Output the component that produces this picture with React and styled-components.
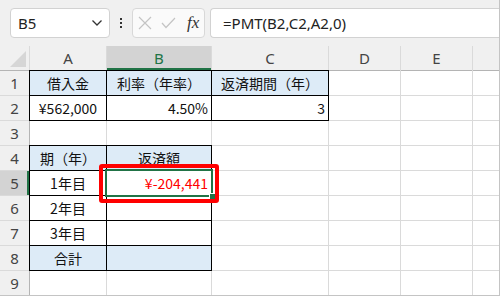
import { Fragment } from 'react';
import styled, { createGlobalStyle } from 'styled-components';

const GlobalStyle = createGlobalStyle`
  html, body {
    margin: 0;
    padding: 0;
    background: #fff;
  }
  body {
    font-family: "Noto Sans CJK JP", "Noto Sans", sans-serif;
  }
`;

const green = '#217346';
const ui = '"Noto Sans", "Noto Sans CJK JP", sans-serif';

const Frame = styled.div`
  width: 500px;
  height: 296px;
  box-sizing: border-box;
  border-right: 1px solid #c4c4c4;
  border-bottom: 1px solid #c4c4c4;
  background: #f0f0f0;
  overflow: hidden;
`;

const Toolbar = styled.div`
  display: flex;
  align-items: flex-start;
  height: 46px;
  padding: 8px 0 0 10px;
  box-sizing: border-box;
`;

const NameBox = styled.div`
  display: flex;
  align-items: center;
  justify-content: space-between;
  width: 100px;
  height: 30px;
  box-sizing: border-box;
  padding: 0 6px 0 7px;
  background: #fff;
  border: 1px solid #d2d2d2;
  border-radius: 4px;
  font-family: ${ui};
  font-size: 15px;
  color: #222;
`;

const MoreDots = styled.div`
  display: flex;
  flex-direction: column;
  align-items: center;
  justify-content: center;
  gap: 2px;
  width: 22px;
  height: 30px;

  span {
    width: 2px;
    height: 2px;
    background: #333;
  }
`;

const FormulaButtons = styled.div`
  display: flex;
  align-items: center;
  gap: 9px;
  width: 73px;
  height: 30px;
  box-sizing: border-box;
  padding: 0 0 0 5px;
  background: #fafafa;
  border: 1px solid #d8d8d8;
  border-radius: 4px;
`;

const Fx = styled.span`
  font-family: "Liberation Serif", serif;
  font-style: italic;
  font-size: 17px;
  color: #333;
  margin-left: 2px;
`;

const FormulaInput = styled.div`
  flex: 1;
  height: 30px;
  margin-left: 5px;
  box-sizing: border-box;
  padding-left: 12px;
  background: #fff;
  border: 1px solid #d2d2d2;
  border-right: none;
  border-radius: 4px 0 0 4px;
  font-family: ${ui};
  font-size: 15px;
  line-height: 28px;
  color: #222;
`;

const Sheet = styled.div`
  display: grid;
  grid-template-columns: 29px 76px 104px 116px 71px 71px 26px;
  grid-template-rows: repeat(10, 24px);
  gap: 1px;
  background: #dadada;
`;

const ColHead = styled.div`
  display: flex;
  align-items: center;
  justify-content: center;
  background: ${(p) => (p.$active ? '#d3d3d3' : '#f0f0f0')};
  box-shadow: ${(p) => (p.$active ? `inset 0 -2px 0 ${green}, ` : '')}0 1px 0 #b4b4b4;
  font-family: ${ui};
  font-size: 15px;
  color: ${(p) => (p.$active ? green : '#444')};
`;

const Corner = styled(ColHead)`
  align-items: flex-end;
  justify-content: flex-end;
  padding: 0 3px 3px 0;
  box-sizing: border-box;
`;

const RowHead = styled.div`
  display: flex;
  align-items: center;
  justify-content: center;
  background: ${(p) => (p.$active ? '#d3d3d3' : '#f0f0f0')};
  box-shadow: ${(p) => (p.$active ? `inset -2px 0 0 ${green}, ` : '')}1px 0 0 #b4b4b4;
  font-family: ${ui};
  font-size: 15px;
  color: #444;
`;

const Cell = styled.div`
  position: relative;
  display: flex;
  align-items: center;
  justify-content: ${(p) => p.$align || 'center'};
  padding: 0 3px;
  background: ${(p) => (p.$fill ? '#ddebf7' : '#fff')};
  box-shadow: ${(p) => (p.$boxed ? '0 0 0 1px #000' : 'none')};
  font-family: "Noto Sans CJK JP", sans-serif;
  font-size: 14px;
  color: ${(p) => p.$color || '#111'};
  white-space: nowrap;
`;

const Selection = styled.div`
  position: absolute;
  top: -2px;
  left: -2px;
  right: -2px;
  bottom: -2px;
  border: 2px solid ${green};
  z-index: 1;
`;

const FillHandle = styled.div`
  position: absolute;
  right: -5px;
  bottom: -5px;
  width: 5px;
  height: 5px;
  background: ${green};
  border: 1px solid #fff;
`;

const Highlight = styled.div`
  position: absolute;
  top: -7px;
  left: -8px;
  right: -8px;
  bottom: -8px;
  border: 4px solid #ff0000;
  border-radius: 3px;
  z-index: 2;
`;

const cols = ['A', 'B', 'C', 'D', 'E', ''];

const rows = [
  [
    { t: '借入金', fill: true, boxed: true },
    { t: '利率（年率）', fill: true, boxed: true },
    { t: '返済期間（年）', fill: true, boxed: true },
  ],
  [
    { t: '¥562,000', boxed: true },
    { t: '4.50%', align: 'flex-end', boxed: true },
    { t: '3', align: 'flex-end', boxed: true },
  ],
  [],
  [
    { t: '期（年）', fill: true, boxed: true },
    { t: '返済額', fill: true, boxed: true },
  ],
  [
    { t: '1年目', boxed: true },
    { t: '¥-204,441', align: 'flex-end', boxed: true, color: '#ff0000', selected: true },
  ],
  [{ t: '2年目', boxed: true }, { boxed: true }],
  [{ t: '3年目', boxed: true }, { boxed: true }],
  [{ t: '合計', fill: true, boxed: true }, { fill: true, boxed: true }],
  [],
];

export default function App() {
  return (
    <>
      <GlobalStyle />
      <Frame>
        <Toolbar>
          <NameBox>
            B5
            <svg width="12" height="8" viewBox="0 0 12 8">
              <polyline points="1.5,1.5 6,6 10.5,1.5" fill="none" stroke="#333" strokeWidth="1.3" />
            </svg>
          </NameBox>
          <MoreDots>
            <span />
            <span />
            <span />
          </MoreDots>
          <FormulaButtons>
            <svg width="14" height="14" viewBox="0 0 14 14">
              <path d="M1 1 L13 13 M13 1 L1 13" stroke="#c4c4c4" strokeWidth="1.2" />
            </svg>
            <svg width="15" height="12" viewBox="0 0 15 12">
              <polyline points="1,6 5,10.5 14,1" fill="none" stroke="#c4c4c4" strokeWidth="1.2" />
            </svg>
            <Fx>fx</Fx>
          </FormulaButtons>
          <FormulaInput>=PMT(B2,C2,A2,0)</FormulaInput>
        </Toolbar>
        <Sheet>
          <Corner>
            <svg width="16" height="16" viewBox="0 0 16 16">
              <polygon points="16,0 16,16 0,16" fill="#d6d6d6" />
            </svg>
          </Corner>
          {cols.map((c, i) => (
            <ColHead key={i} $active={c === 'B'}>
              {c}
            </ColHead>
          ))}
          {rows.map((r, ri) => (
            <Fragment key={ri}>
              <RowHead $active={ri === 4}>{ri + 1}</RowHead>
              {cols.map((_, ci) => {
                const cell = r[ci] || {};
                return (
                  <Cell
                    key={ci}
                    $fill={cell.fill}
                    $boxed={cell.boxed}
                    $align={cell.align}
                    $color={cell.color}
                  >
                    {cell.t}
                    {cell.selected && (
                      <>
                        <Selection>
                          <FillHandle />
                        </Selection>
                        <Highlight />
                      </>
                    )}
                  </Cell>
                );
              })}
            </Fragment>
          ))}
        </Sheet>
      </Frame>
    </>
  );
}
